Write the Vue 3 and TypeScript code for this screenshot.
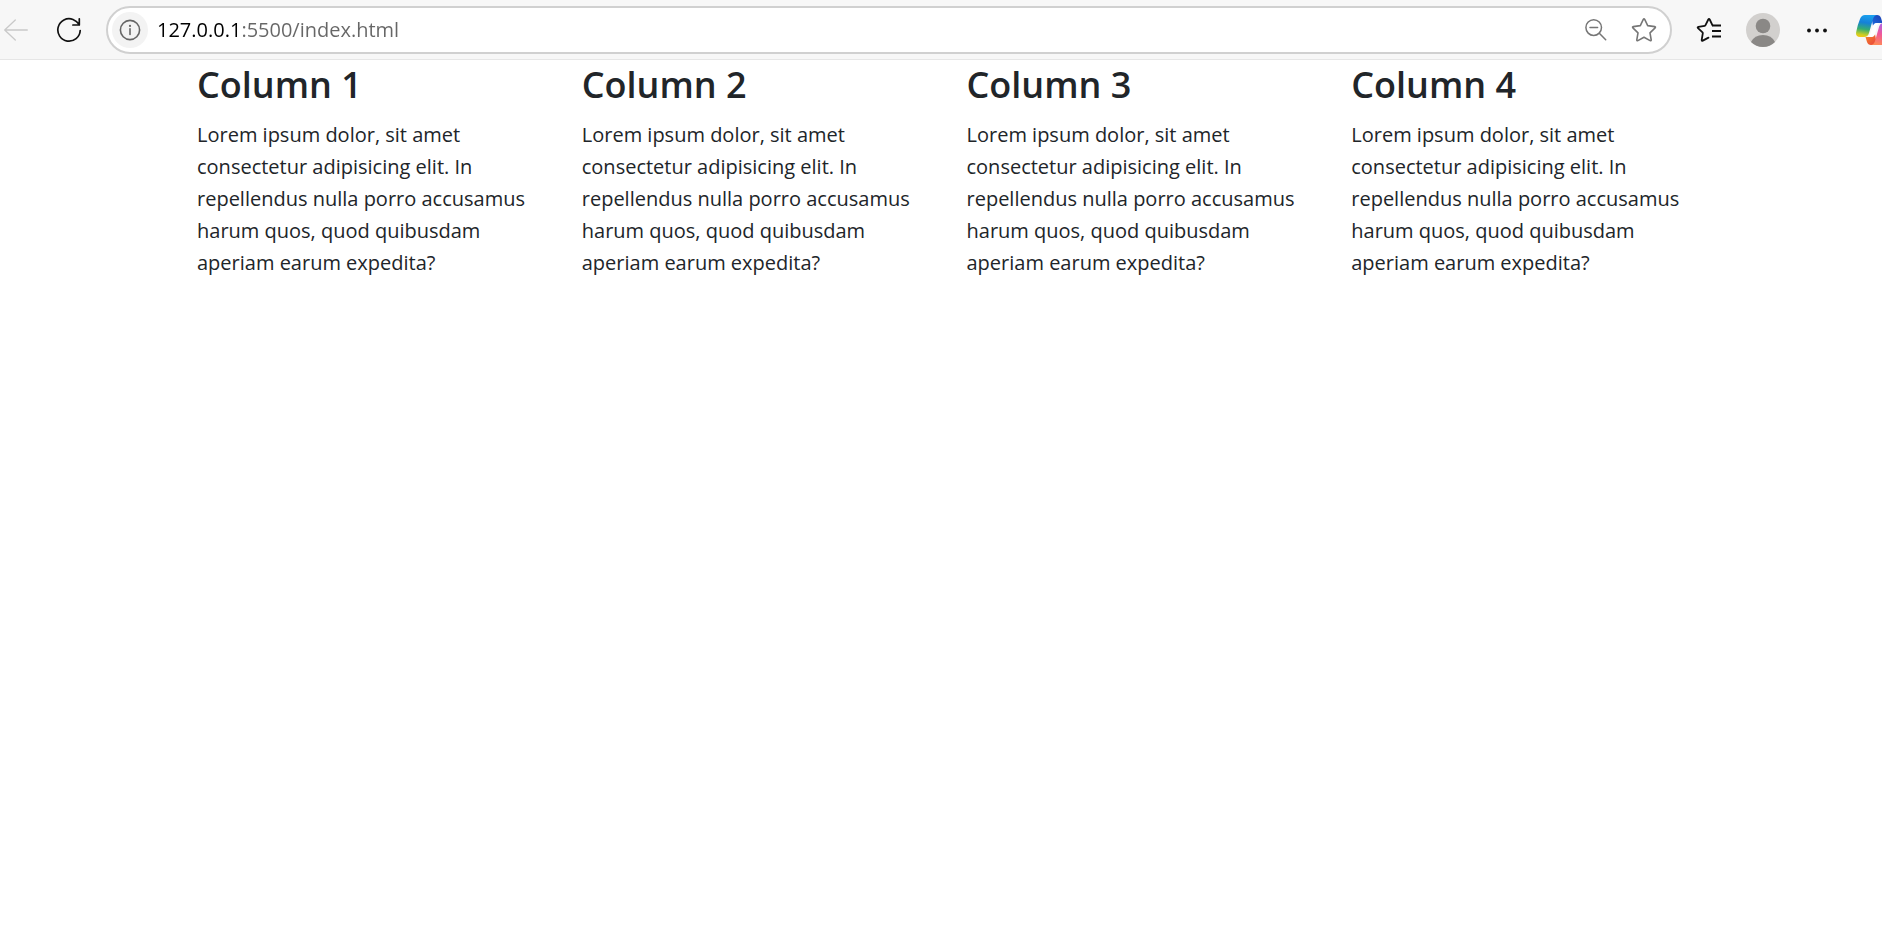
<script setup lang="ts">
import { ref } from 'vue'

interface Column {
  title: string
  text: string
}

const address = ref<string>('127.0.0.1:5500/index.html')

const text: string =
  'Lorem ipsum dolor, sit amet consectetur adipisicing elit. In repellendus nulla porro accusamus harum quos, quod quibusdam aperiam earum expedita?'

const columns: Column[] = [1, 2, 3, 4].map((n) => ({ title: `Column ${n}`, text }))
</script>

<template>
  <div class="browser">
    <header class="toolbar">
      <button class="tool back" type="button" aria-label="Back" disabled>
        <svg width="24" height="24" viewBox="0 0 24 24" fill="none" stroke="#c9c9c9" stroke-width="1.3" stroke-linecap="round" stroke-linejoin="round">
          <path d="M23.3 12H.7M11.3 2L.7 12l10.600 10" />
        </svg>
      </button>
      <button class="tool reload" type="button" aria-label="Refresh">
        <svg width="26" height="26" viewBox="0 0 26 26" fill="none" stroke="#111" stroke-width="1.7" stroke-linecap="round" stroke-linejoin="round">
          <path d="M24.2 13.500A11.200 11.200 0 1 1 17 2.500Q21 4.200 23.200 7.600M23.300 1.800v6.200h-6.400" />
        </svg>
      </button>

      <form class="address" @submit.prevent>
        <button class="site-info" type="button" aria-label="View site information">
          <svg width="22" height="22" viewBox="0 0 22 22" fill="none" stroke="#666" stroke-width="1.6">
            <circle cx="11" cy="11" r="9.6" />
            <path d="M11 9.800v5.600" stroke-linecap="round" />
            <circle cx="11" cy="6.9" r="1.1" fill="#666" stroke="none" />
          </svg>
        </button>
        <input v-model="address" class="url" type="text" aria-label="Address" spellcheck="false" />
        <button class="tool inner" type="button" aria-label="Zoom out">
          <svg width="24" height="24" viewBox="0 0 24 24" fill="none" stroke="#767676" stroke-width="1.5" stroke-linecap="round">
            <circle cx="9.7" cy="9.6" r="7.8" />
            <path d="M15.300 15.200l6.400 6.500M6 9.600h7.600" />
          </svg>
        </button>
        <button class="tool inner" type="button" aria-label="Add this page to favorites">
          <svg width="26" height="26" viewBox="0 0 26 26" fill="none" stroke="#767676" stroke-width="1.6" stroke-linejoin="round">
            <path d="M12.300 2.300q.7-1.200 1.400 0l3 6.300 7 1q1.300.3.4 1.300l-5.100 4.900 1.200 7q.1 1.300-1.100.8L13 20.300l-6.100 3.300q-1.200.5-1.100-.8l1.200-7L1.900 10.900q-.9-1 .4-1.300l7-1z" />
          </svg>
        </button>
      </form>

      <button class="tool" type="button" aria-label="Favorites">
        <svg width="26" height="26" viewBox="0 0 26 26" fill="none" stroke="#111" stroke-width="1.8" stroke-linecap="round" stroke-linejoin="round">
          <path d="M16.400 8.200L13.700 2.500q-.7-1.200-1.400 0l-2.800 5.700q-.2.5-.8.6l-6.300 1q-1.300.3-.4 1.300l4.500 4.300q.4.4.3.900l-1.100 6.500q-.1 1.300 1.100.8l5.700-3" />
          <path d="M16 8.500h9M16 14h9M16 19.500h9" stroke-linecap="butt" />
        </svg>
      </button>
      <button class="tool" type="button" aria-label="Profile">
        <svg width="34" height="34" viewBox="0 0 34 34">
          <circle cx="17" cy="17" r="17" fill="#d2d0ce" />
          <circle cx="17" cy="13" r="7.3" fill="#8a8886" />
          <path d="M5 29Q8.500 22 17 22t12 7a17 17 0 0 1-24 0z" fill="#8a8886" />
        </svg>
      </button>
      <button class="tool" type="button" aria-label="Settings and more">
        <svg width="24" height="24" viewBox="0 0 24 24" fill="#111">
          <circle cx="4" cy="12.500" r="1.900" />
          <circle cx="12" cy="12.500" r="1.900" />
          <circle cx="20" cy="12.500" r="1.900" />
        </svg>
      </button>
      <button class="tool copilot" type="button" aria-label="Copilot">
        <svg width="36" height="30" viewBox="0 0 36 30">
          <defs>
            <linearGradient id="wing-left" x1="0.5" y1="0" x2="0.35" y2="1">
              <stop offset="0" stop-color="#1ba0ee" />
              <stop offset="0.35" stop-color="#1581d8" />
              <stop offset="0.65" stop-color="#35ad72" />
              <stop offset="0.9" stop-color="#c9ce25" />
              <stop offset="1" stop-color="#f0c818" />
            </linearGradient>
            <linearGradient id="fold-top" x1="0" y1="1" x2="1" y2="0">
              <stop offset="0" stop-color="#1b6fe0" />
              <stop offset="1" stop-color="#1d3fb4" />
            </linearGradient>
            <linearGradient id="wing-right" x1="0.6" y1="0" x2="0.3" y2="1">
              <stop offset="0" stop-color="#a565ee" />
              <stop offset="0.5" stop-color="#f0589a" />
              <stop offset="1" stop-color="#ff8a55" />
            </linearGradient>
            <linearGradient id="fold-bottom" x1="0" y1="0" x2="1" y2="1">
              <stop offset="0" stop-color="#f58a2a" />
              <stop offset="1" stop-color="#e83e3e" />
            </linearGradient>
          </defs>
          <path d="M15 0h6q3 0 4 3l1.500 5H21q-3 0-4 3z" fill="url(#fold-top)" />
          <path d="M21 30h-6q-3 0-4-3l-1.500-5H15q3 0 4-3z" fill="url(#fold-bottom)" />
          <path d="M9 0h12q-3 .5-4 4l-4 14q-1 4-5 4H4q-5 0-3.700-5.500Q1.500 10 4 4 5.500 0 9 0z" fill="url(#wing-left)" />
          <path d="M27 30H15q3-.5 4-4l4-14q1-4 5-4h4q5 0 3.700 5.500Q34.500 20 32 26q-1.500 4-5 4z" fill="url(#wing-right)" />
          <path d="M21 8h2.500q-1.500.5-2 2.500L19 19q-1 3-4 3h-3q1.500-.5 2-2.500L17 11q1-3 4-3z" fill="#fff" />
        </svg>
      </button>
    </header>

    <main class="container">
      <section v-for="column in columns" :key="column.title" class="column">
        <h2>{{ column.title }}</h2>
        <p>{{ column.text }}</p>
      </section>
    </main>
  </div>
</template>

<style>
body {
  margin: 0;
  background: #fff;
}
</style>

<style scoped>
.browser {
  min-height: 100vh;
  overflow: hidden;
  color: #212529;
  font-family: "Open Sans", "Noto Sans", sans-serif;
}

.toolbar {
  display: flex;
  align-items: center;
  height: 60px;
  box-sizing: border-box;
  border-bottom: 1px solid #e6e6e6;
  background: #f7f7f7;
}

.tool {
  display: flex;
  flex: none;
  align-items: center;
  justify-content: center;
  width: 54px;
  height: 40px;
  padding: 0;
  border: 0;
  background: none;
}

.tool svg,
.site-info svg {
  display: block;
}

.back {
  width: 32px;
}

.reload {
  width: 74px;
}

.address {
  display: flex;
  flex: 1;
  align-items: center;
  min-width: 0;
  height: 48px;
  box-sizing: border-box;
  margin-right: 10px;
  padding: 0 2px 0 4px;
  border: 2px solid #d0d0d0;
  border-radius: 24px;
  background: #fff;
}

.site-info {
  display: flex;
  flex: none;
  align-items: center;
  justify-content: center;
  width: 36px;
  height: 36px;
  padding: 0;
  border: 0;
  border-radius: 50%;
  background: #f3f3f3;
}

/* The host is drawn darker than the port and path that follow it. */
.url {
  flex: 1;
  min-width: 0;
  height: 36px;
  padding: 0 0 0 9px;
  border: 0;
  outline: 0;
  color: #666;
  background: linear-gradient(to right, #000 92px, #666 92px);
  background-clip: text;
  -webkit-background-clip: text;
  -webkit-text-fill-color: transparent;
  font: 400 20px/36px "Open Sans", "Noto Sans", sans-serif;
}

.inner {
  width: 48px;
}

.copilot {
  width: 60px;
  margin-right: -22px;
}

.container {
  display: grid;
  grid-template-columns: repeat(4, 1fr);
  margin: 0 162px 0 181px;
}

.column {
  padding: 0 16px;
}

h2 {
  margin: 0 0 9px;
  font-size: 36px;
  font-weight: 600;
  line-height: 50px;
}

p {
  margin: 0;
  font-size: 20px;
  line-height: 32px;
}
</style>
